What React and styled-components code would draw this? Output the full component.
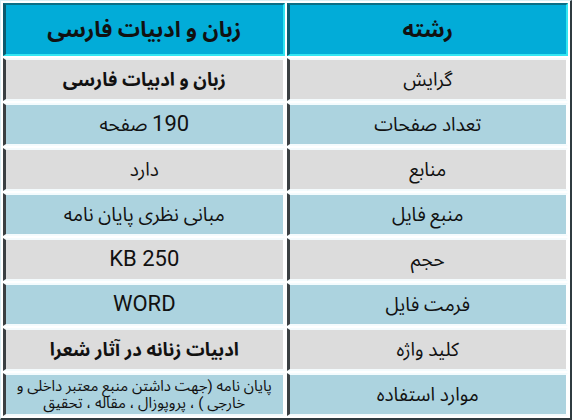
import React from 'react';
import styled, { createGlobalStyle } from 'styled-components';

const GlobalStyle = createGlobalStyle`
	body {
		margin: 0;
		background: #ffffff;
		font-family: Roboto, "Noto Sans Arabic", "DejaVu Sans", sans-serif;
	}
`;

const Table = styled.table`
	width: 572px;
	direction: rtl;
	border-spacing: 2px;
	border-style: solid;
	border-width: 1px 2px 2px 1px;
	border-color: #d8eef4 #2f3b40 #2f3b40 #d8eef4;
	table-layout: fixed;
	background: #ffffff;
`;

const Cell = styled.td`
	width: 50%;
	height: ${(p) => (p.$head ? '49px' : '39px')};
	padding: 0 4px;
	text-align: center;
	vertical-align: middle;
	color: #111;
	background: ${(p) => (p.$head ? '#02acd8' : p.$alt ? '#acd3df' : '#dcdcdc')};
	border-style: solid;
	border-width: 2px 2px 2px 3px;
	border-color: ${(p) =>
		p.$head
			? '#0b6f86 #33e6f2 #33e6f2 #0b5a6e'
			: '#f4fbfd #ffffff #f4fbfd #3a3f42'};
	font-size: ${(p) => (p.$head ? '22px' : p.$small ? '15px' : p.$bold ? '18.5px' : '19px')};
	font-weight: ${(p) => (p.$bold ? 700 : 400)};
	line-height: ${(p) => (p.$small ? '17px' : '26px')};
`;

const Latin = styled.span`
	font-size: 22px;
`;

const rows = [
	['گرایش', 'زبان و ادبیات فارسی', { bold: true }],
	['تعداد صفحات', <><Latin>190</Latin> صفحه</>, {}],
	['منابع', 'دارد', {}],
	['منبع فایل', 'مبانی نظری پایان نامه', {}],
	['حجم', <Latin>KB 250</Latin>, {}],
	['فرمت فایل', <Latin>WORD</Latin>, {}],
	['کلید واژه', 'ادبیات زنانه در آثار شعرا', { bold: true }],
	['موارد استفاده', 'پایان نامه (جهت داشتن منبع معتبر داخلی و خارجی ) ، پروپوزال ، مقاله ، تحقیق', { small: true }],
];

function App() {
	return (
		<>
			<GlobalStyle />
			<Table>
				<tbody>
					<tr>
						<Cell $head $bold>رشته</Cell>
						<Cell $head $bold>زبان و ادبیات فارسی</Cell>
					</tr>
					{rows.map(([label, value, opt], i) => (
						<tr key={label}>
							<Cell $alt={i % 2 === 1}>{label}</Cell>
							<Cell $alt={i % 2 === 1} $bold={opt.bold} $small={opt.small}>
								{value}
							</Cell>
						</tr>
					))}
				</tbody>
			</Table>
		</>
	);
}

export default App;
